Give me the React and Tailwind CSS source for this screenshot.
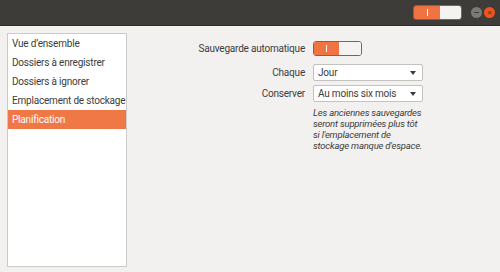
export default function App() {
  const items = [
    'Vue d\u2019ensemble',
    'Dossiers à enregistrer',
    'Dossiers à ignorer',
    'Emplacement de stockage',
    'Planification',
  ]
  return (
    <div
      className="flex h-[272px] w-[500px] flex-col bg-[#f2f1f0] text-[10px] tracking-[-0.2px] text-[#3c3c3c]"
      style={{ fontFamily: 'Roboto, "Noto Sans", sans-serif' }}
    >
      <header className="flex h-[26px] items-center justify-end border-b border-[#2b2a27] bg-[#3d3c38] pr-[5px]">
        <div className="flex h-[15px] w-[49px] overflow-hidden rounded-[3px] border border-[#b5512a]">
          <div className="flex w-[26px] items-center justify-center bg-[#ef7343]">
            <span className="h-[7px] w-[1px] bg-white" />
          </div>
          <div className="flex-1 bg-[#f4f3f2]" />
        </div>
        <span className="ml-[9px] flex h-[11px] w-[11px] items-center justify-center rounded-full bg-[#7b7a76]">
          <span className="h-[1px] w-[5px] bg-[#3d3c38]" />
        </span>
        <span className="ml-[2px] flex h-[11px] w-[11px] items-center justify-center rounded-full bg-[#e95420] text-[8px] leading-none text-[#3d3c38]">
          ×
        </span>
      </header>

      <div className="flex flex-1 px-[7px] pt-[7px] pb-[5px]">
        <ul className="w-[120px] border border-[#cdcbc8] bg-white">
          {items.map((t, i) => (
            <li
              key={t}
              className={
                'flex h-[19px] items-center whitespace-nowrap pl-[4px] ' +
                (i === 4 ? 'bg-[#f07746] text-white' : '')
              }
            >
              {t}
            </li>
          ))}
        </ul>

        <div className="ml-[8px] flex flex-col pt-[8px]">
          <div className="flex h-[15px] items-center gap-[8px]">
            <span className="w-[170px] text-right">Sauvegarde automatique</span>
            <div className="flex h-[15px] w-[49px] overflow-hidden rounded-[3px] border border-[#b5512a]">
              <div className="flex w-[25px] items-center justify-center bg-[#ef7343]">
                <span className="h-[7px] w-[1px] bg-white" />
              </div>
              <div className="flex-1 bg-[#f4f3f2]" />
            </div>
          </div>

          <div className="mt-[8px] flex h-[17px] items-center gap-[8px]">
            <span className="w-[170px] text-right">Chaque</span>
            <div className="flex h-[17px] w-[110px] items-center justify-between rounded-[2px] border border-[#c4c2bf] bg-white pr-[6px] pl-[4px]">
              <span>Jour</span>
              <span className="h-0 w-0 border-x-[3.5px] border-t-[4px] border-x-transparent border-t-[#3c3c3c]" />
            </div>
          </div>

          <div className="mt-[4px] flex h-[17px] items-center gap-[8px]">
            <span className="w-[170px] text-right">Conserver</span>
            <div className="flex h-[17px] w-[110px] items-center justify-between rounded-[2px] border border-[#c4c2bf] bg-white pr-[6px] pl-[4px]">
              <span className="whitespace-nowrap">Au moins six mois</span>
              <span className="h-0 w-0 border-x-[3.5px] border-t-[4px] border-x-transparent border-t-[#3c3c3c]" />
            </div>
          </div>

          <p className="mt-[5px] ml-[178px] w-[112px] text-[9.5px] leading-[11px] tracking-[-0.2px] italic">
            Les anciennes sauvegardes seront supprimées plus tôt si l'emplacement de stockage manque d'espace.
          </p>
        </div>
      </div>
    </div>
  )
}
